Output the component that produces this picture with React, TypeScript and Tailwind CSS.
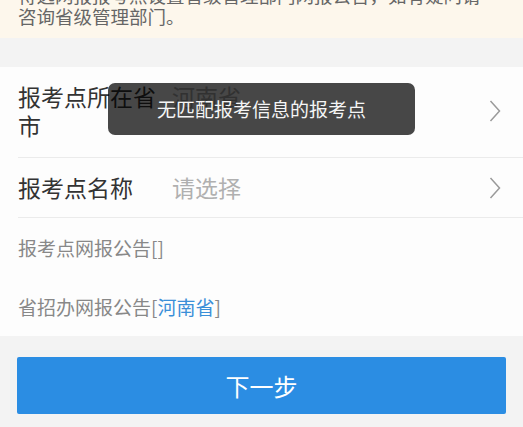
import React from "react";

const Chevron = () => (
  <svg width="12" height="24" viewBox="0 0 12 24" className="shrink-0">
    <polyline points="1.5,2 10.5,12 1.5,22" fill="none" stroke="#9a9a9a" strokeWidth="1.5" strokeLinejoin="miter" />
  </svg>
);

export default function App() {
  const font = { fontFamily: '"Noto Sans CJK SC", "Noto Sans", sans-serif' };
  return (
    <div className="relative w-[523px] h-[427px] overflow-hidden bg-[#f3f3f3]" style={font}>
      <div className="bg-[#fdf7ec] px-[18px] pb-[11px]">
        <p className="-mt-[15px] text-[18.5px] leading-[21px] text-[#666] whitespace-nowrap">
          待选网报报考点设置省级管理部门网报公告，如有疑问请
          <br />
          咨询省级管理部门。
        </p>
      </div>
      <div className="h-[29px]" />
      <div className="bg-[#fdfdfd]">
        <div className="ml-[18px] flex items-center pr-[22px] pt-[15px] pb-[17px] border-b border-[#ebebeb]">
          <div className="w-[142px] text-[23px] leading-[29px] text-[#333]">报考点所在省市</div>
          <div className="ml-[12px] flex-1 self-start text-[23px] leading-[29px] text-[#b0b0b0]">河南省</div>
          <Chevron />
        </div>
        <div className="ml-[18px] flex items-center pr-[22px] py-[15px] border-b border-[#ebebeb]">
          <div className="w-[142px] text-[23px] leading-[29px] text-[#333]">报考点名称</div>
          <div className="ml-[12px] flex-1 text-[23px] leading-[29px] text-[#b0b0b0]">请选择</div>
          <Chevron />
        </div>
        <div className="px-[18px] h-[60px] flex items-center text-[19px] text-[#888]">报考点网报公告[]</div>
        <div className="px-[18px] h-[58px] flex items-center text-[19px] text-[#888]">
          省招办网报公告[<span className="text-[#3a8fd8]">河南省</span>]
        </div>
      </div>
      <div className="px-[17px] pt-[21px]">
        <button className="w-[489px] h-[57px] rounded-[2px] bg-[#2b8de3] text-white text-[24px] flex items-center justify-center">
          下一步
        </button>
      </div>
      <div className="absolute left-[108px] top-[83px] w-[307px] h-[52px] rounded-[7px] bg-[rgba(0,0,0,0.72)] flex items-center justify-center text-[19px] text-[#f5f5f5]">
        无匹配报考信息的报考点
      </div>
    </div>
  );
}
